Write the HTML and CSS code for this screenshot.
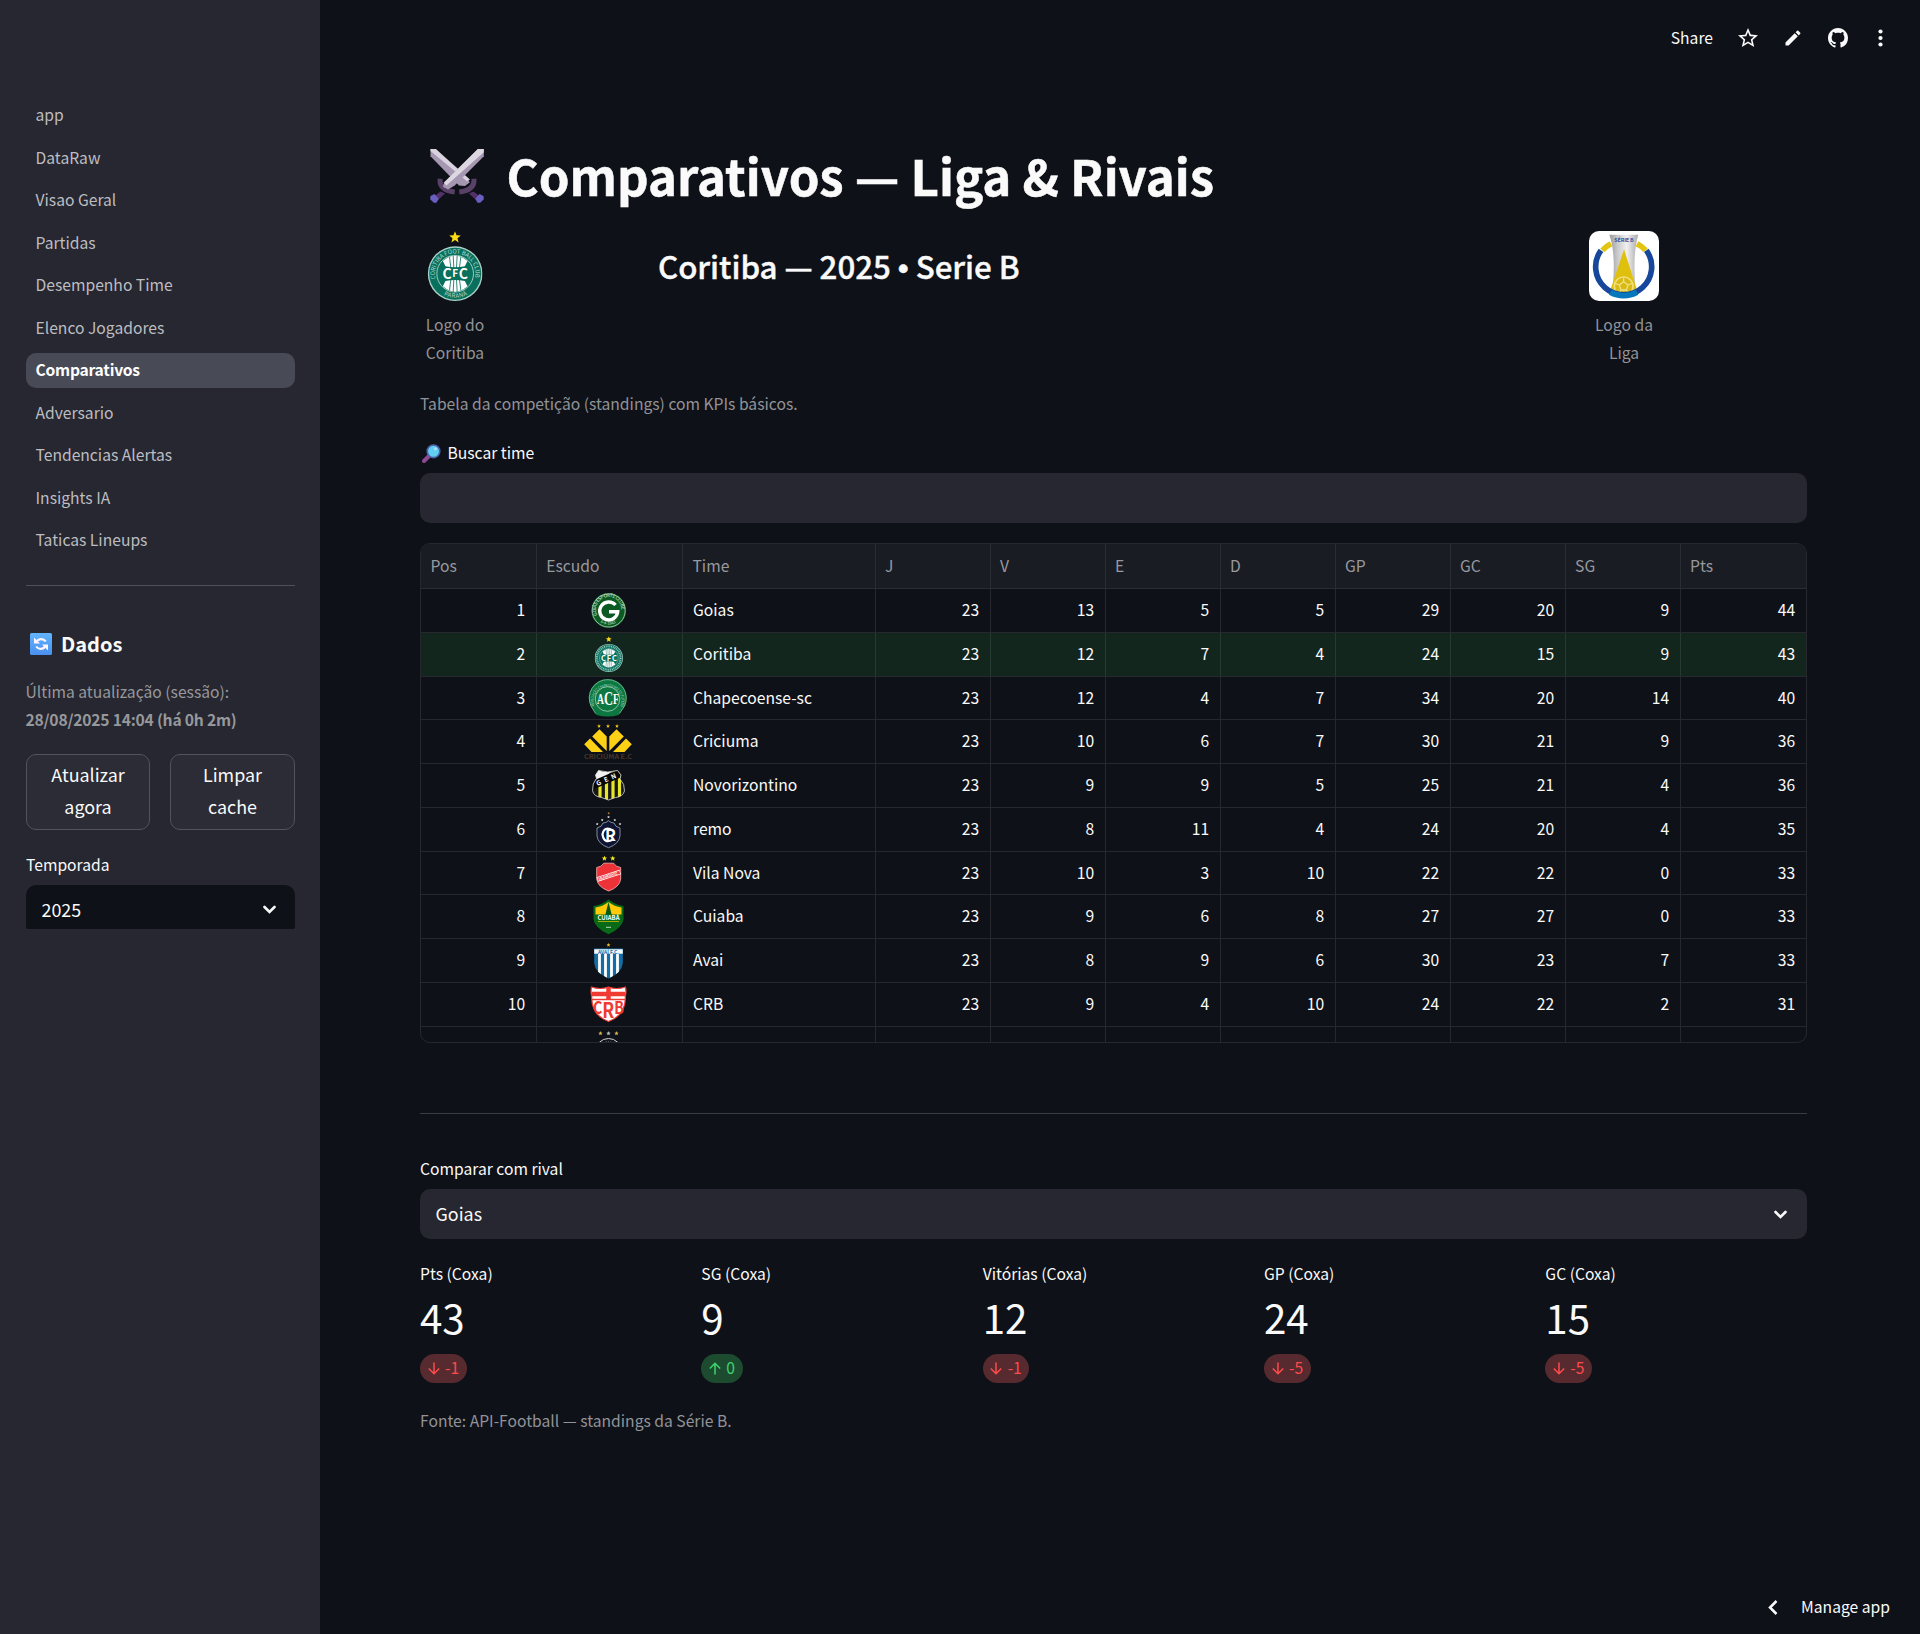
FILE: index.html
```html
<!DOCTYPE html>
<html lang="pt-BR">
<head>
<meta charset="utf-8">
<title>Comparativos</title>
<link rel="stylesheet" href="styles.css">
</head>
<body>
<svg class="defs" aria-hidden="true">
  <symbol id="star" viewBox="0 0 20 20"><path d="M10 0l2.600 6.900 7.400.3-5.800 4.600 2 7.200-6.200-4.100L3.800 19l2-7.200L0 7.200l7.400-.3z"/></symbol>
  <symbol id="chevron" viewBox="0 0 13 9"><path d="M1.500 2L6.500 7l5-5" fill="none" stroke="currentColor" stroke-width="2.600" stroke-linecap="round"/></symbol>
  <symbol id="down" viewBox="0 0 12 13"><path d="M6 .5v11M.8 6.500L6 11.700l5.200-5.200" fill="none" stroke="currentColor" stroke-width="1.500"/></symbol>
  <symbol id="up" viewBox="0 0 12 13"><path d="M6 12.500v-11M.8 6.500L6 1.300l5.200 5.200" fill="none" stroke="currentColor" stroke-width="1.500"/></symbol>
  <symbol id="coritiba" viewBox="38 272 165 210">
    <use href="#star" x="103" y="273" width="35" height="35" fill="#fddc14"/>
    <circle cx="121" cy="400" r="82" fill="#a9d3ca"/>
    <circle cx="121" cy="400" r="78" fill="#08705c"/>
    <circle cx="121" cy="400" r="55" fill="#08705c" stroke="#9fccc2" stroke-width="3"/>
    <path d="M84 362Q121 330 158 362L150 378Q121 384 92 378zM84 438Q121 470 158 438L150 422Q121 416 92 422z" fill="#fff"/>
    <path d="M104 350l4 32M115 345l2 38M127 345l-2 38M138 350l-4 32M104 450l4-32M115 455l2-38M127 455l-2-38M138 450l-4-32" stroke="#08705c" stroke-width="2.500"/>
  </symbol>
</svg>

<div class="app">
  <aside class="sidebar">
    <nav class="nav">
      <a>app</a><a>DataRaw</a><a>Visao Geral</a><a>Partidas</a><a>Desempenho Time</a><a>Elenco Jogadores</a>
      <a class="active">Comparativos</a><a>Adversario</a><a>Tendencias Alertas</a><a>Insights IA</a><a>Taticas Lineups</a>
    </nav>
    <hr class="side-rule">
    <h2 class="side-title">
      <svg width="22" height="22" viewBox="0 0 22 22"><defs><linearGradient id="blue" x2="0" y2="1"><stop stop-color="#62b5fd"/><stop offset="1" stop-color="#4a90ef"/></linearGradient></defs><rect width="22" height="22" rx="1.500" fill="url(#blue)"/><path d="M6.200 9.500A5.500 5.500 0 0 1 15.800 8.500M15.800 12.500A5.500 5.500 0 0 1 6.200 13.500" fill="none" stroke="#fff4ff" stroke-width="2.200"/><path d="M4 4.500v6h6zM18 17.500v-6h-6z" fill="#fff4ff"/></svg>
      Dados
    </h2>
    <p class="caption">Última atualização (sessão):<br><b>28/08/2025 14:04 (há 0h 2m)</b></p>
    <div class="buttons"><button>Atualizar<br>agora</button><button>Limpar<br>cache</button></div>
    <p class="label side-label">Temporada</p>
    <div class="select side-select"><span>2025</span><svg width="13" height="9"><use href="#chevron"/></svg></div>
  </aside>

  <main class="main">
    <header class="toolbar">
      <span>Share</span>
      <svg class="i-star" width="24" height="24" viewBox="0 0 24 24"><path fill="currentColor" d="M22 9.240l-7.190-.62L12 2 9.190 8.630 2 9.240l5.460 4.730L5.820 21 12 17.270 18.180 21l-1.630-7.030L22 9.240zM12 15.400l-3.760 2.270 1-4.280-3.320-2.880 4.380-.38L12 6.100l1.710 4.040 4.380.38-3.320 2.880 1 4.280L12 15.400z"/></svg>
      <svg class="i-pen" width="20" height="20" viewBox="0 0 24 24"><path fill="currentColor" d="M3 17.250V21h3.750L17.810 9.940l-3.750-3.750L3 17.250zM20.710 7.040a1 1 0 0 0 0-1.410l-2.340-2.340a1 1 0 0 0-1.410 0l-1.830 1.830 3.750 3.750 1.830-1.830z"/></svg>
      <svg class="i-git" width="20" height="20" viewBox="0 0 16 16"><path fill="currentColor" d="M8 0C3.580 0 0 3.580 0 8c0 3.540 2.290 6.530 5.470 7.590.4.070.55-.17.55-.38 0-.19-.01-.82-.01-1.490-2.010.37-2.530-.49-2.690-.94-.09-.23-.48-.94-.82-1.130-.28-.15-.68-.52-.01-.53.63-.01 1.080.58 1.230.82.72 1.210 1.870.87 2.330.66.07-.52.28-.87.51-1.070-1.780-.2-3.640-.89-3.640-3.950 0-.87.31-1.590.82-2.150-.08-.2-.36-1.020.08-2.120 0 0 .67-.21 2.200.82.64-.18 1.320-.27 2-.27s1.360.09 2 .27c1.530-1.040 2.200-.82 2.200-.82.44 1.100.16 1.920.08 2.120.51.56.82 1.270.82 2.150 0 3.070-1.870 3.750-3.650 3.950.29.25.54.73.54 1.480 0 1.070-.01 1.930-.01 2.200 0 .21.15.46.55.38A8.010 8.010 0 0 0 16 8c0-4.420-3.580-8-8-8z"/></svg>
      <svg class="i-dots" width="5" height="18" viewBox="0 0 5 18"><g fill="currentColor"><circle cx="2.500" cy="2.500" r="2.100"/><circle cx="2.500" cy="9" r="2.100"/><circle cx="2.500" cy="15.500" r="2.100"/></g></svg>
    </header>

    <section class="content">
      <h1 class="title">
        <svg width="54" height="54" viewBox="45 28 162 163">
          <path d="M46 28h16L165 128 150 140 132 138 46 50z" fill="#a596b2"/><path d="M46 28h16L165 120l-8 6L46 34z" fill="#d9d2df"/>
          <path d="M75 118q-4 34 44 40M177 118q4 34-44 40" fill="none" stroke="#584067" stroke-width="15"/>
          <path d="M76 156l14 6-22 20-12-10zM176 156l-14 6 22 20 12-10z" fill="#54306b"/>
          <path d="M46 170l12-6 13 14-7 12H56L45 180zM206 170l-12-6-13 14 7 12h8l11-10z" fill="#6a5fc0"/>
          <path d="M207 28h-18L88 128l-5 14 16 8 20-12 88-88z" fill="#a596b2"/><path d="M207 28h-18L86 130l8 8L207 38z" fill="#ddd7e2"/>
        </svg>
        <span>Comparativos — Liga &amp; Rivais</span>
      </h1>
      <div class="hero">
        <figure>
          <svg width="70" height="70" viewBox="15.500 272 210 210">
            <use href="#coritiba" x="38" y="272" width="165" height="210"/>
            <path id="corArc" d="M62 416A61 61 0 1 1 180 416" fill="none"/>
            <text font-size="18" fill="#b7dcd4"><textPath href="#corArc" textLength="218" lengthAdjust="spacingAndGlyphs">CORITIBA FOOT BALL CLUB</textPath></text>
            <path id="corLow" d="M75 456A72 72 0 0 0 167 456" fill="none"/>
            <text font-size="18" fill="#b7dcd4"><textPath href="#corLow" startOffset="14" textLength="74">PARANÁ</textPath></text>
            <text x="121" y="415" font-size="42" font-weight="700" fill="#fff" text-anchor="middle">C<tspan font-size="30" dx="2" dy="-4">F</tspan><tspan dx="2" dy="4">C</tspan></text>
          </svg>
          <figcaption>Logo do Coritiba</figcaption>
        </figure>
        <h2>Coritiba — 2025 <span class="dot">•</span> Serie B</h2>
        <figure>
          <svg class="league" width="70" height="70" viewBox="0 0 210 210">
            <defs><linearGradient id="cup"><stop stop-color="#999"/><stop offset=".3" stop-color="#ccc"/><stop offset=".6" stop-color="#f0f0f0"/><stop offset="1" stop-color="#aaa"/></linearGradient></defs>
            <rect width="210" height="210" fill="#fff"/>
            <path d="M40 58A84 84 0 0 1 66 38M144 38A84 84 0 0 1 170 58" fill="none" stroke="#e2c510" stroke-width="17"/>
            <path d="M61 11H148Q130 70 140 182H70Q82 70 61 11z" fill="url(#cup)"/>
            <path d="M105 55L145 180Q105 205 63 180z" fill="#dfc10d"/>
            <circle cx="104" cy="166" r="28" fill="#d8ba15" stroke="#f0df7e" stroke-width="5"/>
            <path d="M104 152l13 10-5 15H96l-5-15zM104 152v-12M117 162l12-5M112 177l8 11M96 177l-8 11M91 162l-12-5" fill="none" stroke="#f0df7e" stroke-width="4"/>
            <path d="M36 58A84 84 0 1 0 172 58" fill="none" stroke="#17479b" stroke-width="17"/>
            <path d="M64 184A84 84 0 0 0 144 184" fill="none" stroke="#0878bd" stroke-width="17"/>
            <text x="76" y="34" font-size="16" font-weight="700" fill="#2b55a0" textLength="58">SÉRIE B</text>
          </svg>
          <figcaption>Logo da Liga</figcaption>
        </figure>
      </div>
      <p class="caption intro">Tabela da competição (standings) com KPIs básicos.</p>
      <p class="label search-label">
        <svg width="19" height="19" viewBox="0 0 19 19"><path d="M2 17l6-6" stroke="#8d4a93" stroke-width="4" stroke-linecap="round"/><circle cx="11.500" cy="7.300" r="6.300" fill="#62cdf2" stroke="#4c62a8" stroke-width="1.600"/><circle cx="13.500" cy="4.800" r="1.500" fill="#a9e6fb"/></svg>
        Buscar time
      </p>
      <div class="input"></div>

      <div class="table">
        <div class="row head"><span>Pos</span><span>Escudo</span><span>Time</span><span>J</span><span>V</span><span>E</span><span>D</span><span>GP</span><span>GC</span><span>SG</span><span>Pts</span></div>
        <div class="row"><span>1</span><span><svg viewBox="0 0 48 43"><circle cx="23.700" cy="21.500" r="17.500" fill="#0b5a22"/><circle cx="23.700" cy="21.500" r="16.500" fill="none" stroke="#b9d4bf" stroke-width=".8"/><path id="goA" d="M12.300 26A12.600 12.600 0 1 1 35 26" fill="none"/><text font-size="4.800" fill="#d5e6d8"><textPath href="#goA" textLength="45">GOIÁS ESPORTE CLUBE</textPath></text><path id="goB" d="M13 31.500A15 15 0 0 0 34 31.500" fill="none"/><text font-size="4" fill="#d5e6d8"><textPath href="#goB" startOffset="3">6-4-1943</textPath></text><path d="M30.500 16A9 9 0 1 0 32.700 22.700H24" fill="none" stroke="#fff" stroke-width="3.400"/></svg></span><span>Goias</span><span>23</span><span>13</span><span>5</span><span>5</span><span>29</span><span>20</span><span>9</span><span>44</span></div>
        <div class="row mark"><span>2</span><span><svg viewBox="0 0 48 43"><use href="#coritiba" x="9.500" y="3" width="28.500" height="36"/><circle cx="23.750" cy="25" r="11.800" fill="none" stroke="#8cc3b8" stroke-width="2" stroke-dasharray="1 .8"/><text x="23.900" y="27.700" font-size="7.500" font-weight="700" fill="#fff" text-anchor="middle" textLength="16">CFC</text></svg></span><span>Coritiba</span><span>23</span><span>12</span><span>7</span><span>4</span><span>24</span><span>15</span><span>9</span><span>43</span></div>
        <div class="row"><span>3</span><span><svg viewBox="0 0 48 43"><path d="M11.500 38L5.500 29A19 19 0 1 1 40 29L33.500 38Q23 41 11.500 38z" fill="#0d7741"/><path d="M10.500 36.500L6 29A18.500 18.500 0 1 1 39.500 29L34.500 36.500" fill="none" stroke="#7fbd99" stroke-width=".8"/><circle cx="22.500" cy="22" r="12.300" fill="#0d7741" stroke="#a6d3b8" stroke-width=".8"/><path id="chA" d="M9.500 29A14 14 0 1 1 35.500 29" fill="none"/><text font-size="3.800" fill="#b7dcc6"><textPath href="#chA" textLength="56" lengthAdjust="spacingAndGlyphs">ASSOCIAÇÃO CHAPECOENSE DE FUTEBOL</textPath></text><text class="serif" x="12" y="26.500" font-size="14" font-weight="700" fill="#fff" textLength="22" lengthAdjust="spacingAndGlyphs">A<tspan font-size="18" dy="1.500">C</tspan><tspan dy="-1.500">F</tspan></text></svg></span><span>Chapecoense-sc</span><span>23</span><span>12</span><span>4</span><span>7</span><span>34</span><span>20</span><span>14</span><span>40</span></div>
        <div class="row"><span>4</span><span><svg viewBox="0 0 48 43"><g fill="#fcd116"><use href="#star" x="12" y="4" width="4" height="4"/><use href="#star" x="21" y="4" width="4" height="4"/><use href="#star" x="30" y="4" width="4" height="4"/><path d="M-.8 24.300L5 18.500 18 32H6.500zM7.200 16.600l7.300-7.300 7.200 7.300V31zM46.800 24.300L41 18.500 28 32h11.500zM38.800 16.600l-7.300-7.300-7.200 7.300V31z"/></g><text x="-1" y="39" font-size="5.800" font-weight="700" fill="#46362a" textLength="48" lengthAdjust="spacingAndGlyphs">CRICIÚMA E.C</text></svg></span><span>Criciuma</span><span>23</span><span>10</span><span>6</span><span>7</span><span>30</span><span>21</span><span>9</span><span>36</span></div>
        <div class="row"><span>5</span><span><svg viewBox="0 0 48 43"><defs><clipPath id="nov"><path d="M10.500 11l3-4.500q9 3 19 0l3.500 4.500-1 4q5 5 4.500 12-2 6-9 6.500l-7 2.500-7-2.500q-8-1-9-7-.5-7 4-12z"/></clipPath></defs><g clip-path="url(#nov)"><path d="M0 0h48v43H0z" fill="#161616"/><path d="M15 0v43M21.500 0v43M28 0v43M34.500 0v43" stroke="#e6e629" stroke-width="3.200"/><path d="M9 5h22L9 20z" fill="#f2f2f2"/><path d="M6 22L38 8" stroke="#050505" stroke-width="8"/><text transform="translate(12.500 22) rotate(-24)" font-size="6.500" font-weight="700" fill="#fff" textLength="21">GEN</text></g><path d="M10.500 11l3-4.500q9 3 19 0l3.500 4.500-1 4q5 5 4.500 12-2 6-9 6.500l-7 2.500-7-2.500q-8-1-9-7-.5-7 4-12z" fill="none" stroke="#ddd" stroke-width=".8"/></svg></span><span>Novorizontino</span><span>23</span><span>9</span><span>9</span><span>5</span><span>25</span><span>21</span><span>4</span><span>36</span></div>
        <div class="row"><span>6</span><span><svg viewBox="0 0 48 43"><use href="#star" x="22.200" y="3.700" width="3" height="3" fill="#b07c34"/><g fill="#dfe3ea"><use href="#star" x="22" y="7.500" width="3" height="3"/><use href="#star" x="15.700" y="10.500" width="3" height="3"/><use href="#star" x="28.300" y="10.500" width="3" height="3"/><use href="#star" x="10.700" y="14.500" width="3" height="3"/><use href="#star" x="33.500" y="14.500" width="3" height="3"/></g><path d="M12 20q5-1 6-5 3 0 5.500-2.300Q26 15 29 15q1 4 6 5v8q-1 8-11.500 11.700Q13 36 12 28z" fill="#0d1533" stroke="#8e97ad" stroke-width=".9"/><path d="M28 22.500q-9-5-10.500 4 1.500 10 10.500 5" fill="none" stroke="#fff" stroke-width="2.200"/><text x="20" y="32.500" font-size="16" font-weight="700" fill="#fff">R</text></svg></span><span>remo</span><span>23</span><span>8</span><span>11</span><span>4</span><span>24</span><span>20</span><span>4</span><span>35</span></div>
        <div class="row"><span>7</span><span><svg viewBox="0 0 48 43"><g fill="#f6ef1c"><use href="#star" x="16.700" y="3.500" width="5.500" height="5.500"/><use href="#star" x="25" y="3.500" width="5.500" height="5.500"/></g><path d="M11.700 15.500q5-.5 7-4.300h10q2 3.800 7 4.300v11.500q-1 8-12 12-11-4-12-12z" fill="#ee3338" stroke="#f7b3b3" stroke-width=".8"/><path d="M12.300 27.500L35.200 20" stroke="#fff" stroke-width="4.600"/><path d="M12.800 27.300L34.700 20.200" stroke="#ee3338" stroke-width="3"/><text transform="translate(14 28.400) rotate(-18)" font-size="3.600" font-weight="700" fill="#fff" textLength="20">VILA NOVA F.C</text></svg></span><span>Vila Nova</span><span>23</span><span>10</span><span>3</span><span>10</span><span>22</span><span>22</span><span>0</span><span>33</span></div>
        <div class="row"><span>8</span><span><svg viewBox="0 0 48 43"><path d="M8.500 11q8-1 15-6.500 7 5.500 15 6.500v13q-1 9-15 15.300Q9.500 33 8.500 24z" fill="#086a16"/><path d="M10.500 12.500q7-1 13-5.500 6 4.500 13 5.500V20h-26z" fill="#fdc908"/><path d="M23.500 7l3.500 14h-7z" fill="#065a14"/><rect x="9" y="19.500" width="29" height="7" fill="#086a16"/><text x="12.500" y="25" font-size="6" font-weight="700" fill="#fff" textLength="22" lengthAdjust="spacingAndGlyphs">CUIABÁ</text><path d="M13 26.500h21" stroke="#e8c508" stroke-width=".7"/><path d="M21 32.300h5" stroke="#b8d8bb"/></svg></span><span>Cuiaba</span><span>23</span><span>9</span><span>6</span><span>8</span><span>27</span><span>27</span><span>0</span><span>33</span></div>
        <div class="row"><span>9</span><span><svg viewBox="0 0 48 43"><defs><clipPath id="av"><path d="M9.200 9.500h28.600v14.500q-1 10-14.300 15.500Q10.200 34 9.200 24z"/></clipPath></defs><use href="#star" x="21.400" y="3.800" width="4.200" height="4.200" fill="#e5b52a"/><g clip-path="url(#av)"><path d="M0 0h48v43H0z" fill="#146ea6"/><path d="M14.500 14v29M20.500 14v29M26.500 14v29M32.500 14v29" stroke="#fff" stroke-width="2.800"/><path d="M9 10.300h29v4.500H9z" fill="#f2f7fa"/></g><text x="13" y="14.600" font-size="5" font-weight="700" fill="#146ea6" textLength="21">AVAÍ F.C.</text></svg></span><span>Avai</span><span>23</span><span>8</span><span>9</span><span>6</span><span>30</span><span>23</span><span>7</span><span>33</span></div>
        <div class="row"><span>10</span><span><svg viewBox="0 0 48 43"><path d="M6.500 4q9 3 17 0 8 3 17 0 1 5-.2 9 1 19-16.800 25.500Q6 32 6.700 13 5.500 9 6.500 4z" fill="#fff" stroke="#ef3b32" stroke-width="1.200"/><path d="M23.500 4v13M7 11h33" stroke="#ef3b32" stroke-width="4.500"/><path d="M7 16.500h33" stroke="#ef3b32" stroke-width="1.400"/><text x="8" y="31" font-size="17" font-weight="700" fill="#ef3b32" textLength="31" lengthAdjust="spacingAndGlyphs">C<tspan font-size="21" dy="4">R</tspan><tspan dy="-4">B</tspan></text></svg></span><span>CRB</span><span>23</span><span>9</span><span>4</span><span>10</span><span>24</span><span>22</span><span>2</span><span>31</span></div>
        <div class="row"><span></span><span><svg viewBox="0 0 48 43"><g fill="#d6ac55"><use href="#star" x="13.200" y="4" width="4.600" height="4.600"/><use href="#star" x="21.200" y="4" width="4.600" height="4.600" fill="#b9bcc2"/><use href="#star" x="29.200" y="4" width="4.600" height="4.600"/></g><circle cx="23.500" cy="24.500" r="13" fill="#15171c" stroke="#d0d2d5"/><circle cx="23.500" cy="25" r="9.500" fill="#15171c" stroke="#8a8d92" stroke-width="2" stroke-dasharray="1 1"/></svg></span><span></span><span></span><span></span><span></span><span></span><span></span><span></span><span></span><span></span></div>
      </div>

      <hr class="rule">
      <p class="label rival-label">Comparar com rival</p>
      <div class="select rival-select"><span>Goias</span><svg width="13" height="9"><use href="#chevron"/></svg></div>
      <div class="metrics">
        <div><p class="label">Pts (Coxa)</p><p class="value">43</p><p class="delta"><svg width="12" height="13"><use href="#down"/></svg><span>-1</span></p></div>
        <div><p class="label">SG (Coxa)</p><p class="value">9</p><p class="delta pos"><svg width="12" height="13"><use href="#up"/></svg><span>0</span></p></div>
        <div><p class="label">Vitórias (Coxa)</p><p class="value">12</p><p class="delta"><svg width="12" height="13"><use href="#down"/></svg><span>-1</span></p></div>
        <div><p class="label">GP (Coxa)</p><p class="value">24</p><p class="delta"><svg width="12" height="13"><use href="#down"/></svg><span>-5</span></p></div>
        <div><p class="label">GC (Coxa)</p><p class="value">15</p><p class="delta"><svg width="12" height="13"><use href="#down"/></svg><span>-5</span></p></div>
      </div>
      <p class="caption source">Fonte: API-Football — standings da Série B.</p>
    </section>

    <footer class="manage"><svg width="10" height="15" viewBox="0 0 10 15"><path d="M8.500 1L2 7.500 8.500 14" fill="none" stroke="currentColor" stroke-width="2.500"/></svg><span>Manage app</span></footer>
  </main>
</div>
</body>
</html>
```
FILE: styles.css
```css
* { box-sizing: border-box; margin: 0; padding: 0; }
html, body { height: 1634px; overflow: hidden; }
body {
  background: #0e1117;
  color: #fafafa;
  font-family: "Noto Sans CJK SC", "Noto Sans CJK JP", sans-serif;
  font-size: 15.67px;
}
.defs { position: absolute; width: 0; height: 0; }
svg { display: block; flex: none; overflow: visible; }
.serif { font-family: "Liberation Serif", serif; }

.app { display: grid; grid-template-columns: 320px 1fr; height: 1634px; overflow: hidden; }

/* Sidebar */
.sidebar { background: #262730; padding: 98px 25px 0 26px; display: flex; flex-direction: column; }
.nav { display: flex; flex-direction: column; gap: 8px; }
.nav a { height: 34.5px; line-height: 33.4px; padding: 0 9.5px; border-radius: 10px; color: #bdbdc1; }
.nav .active { background: #484a55; color: #fff; font-weight: 700; letter-spacing: -.25px; }
.side-rule { border: 0; height: 1px; background: #4f5059; margin-top: 27px; }
.side-title { display: flex; align-items: center; gap: 9px; height: 30px; margin-top: 43px; padding-left: 4px; font-size: 20px; line-height: 30px; font-weight: 700; }
.caption { color: #929398; line-height: 28px; }
.caption b { letter-spacing: -.22px; }
.sidebar .caption { margin-top: 19px; color: #97989c; margin-left: -.5px; }
.buttons { display: grid; grid-template-columns: 124px 125px; gap: 20px; margin-top: 20px; }
.buttons button {
  height: 76px; border: 1px solid #52535c; border-radius: 10px; background: #2b2c36;
  color: #fafafa; font: inherit; font-size: 17.9px; line-height: 32px; padding-bottom: 3px;
}
.label { line-height: 28px; height: 28px; }
.side-label { margin-top: 21px; }
.select {
  display: flex; align-items: center; justify-content: space-between;
  height: 50px; padding: 0 19.5px 0 15.5px; border-radius: 10px; background: #262730; font-size: 17.9px;
}
.side-select { height: 44px; margin-top: 6px; padding-top: 4px; background: #0e1117; border-radius: 10px 10px 2px 2px; }
.side-select svg { margin-top: 2px; }

/* Top bar */
.main { display: flex; flex-direction: column; }
.toolbar { display: flex; align-items: center; height: 75px; padding: 0 37px 0 0; justify-content: flex-end; }
.i-star { margin-left: 23px; }
.i-pen { margin-left: 23px; }
.i-git { margin-left: 25px; }
.i-dots { margin-left: 30px; }

/* Page content */
.content { flex: 1; width: 1386.7px; margin-left: 100px; padding-top: 69px; }
.title { display: flex; align-items: center; gap: 22.5px; height: 66px; padding-left: 10px; font-size: 49.2px; line-height: 66px; font-weight: 700; -webkit-text-stroke: .5px #fafafa; }
.title svg { margin-bottom: 2px; }
.title span { padding-bottom: 5px; }
.hero { display: flex; align-items: flex-start; margin-top: 21px; height: 137px; }
.hero figure { width: 70px; }
.hero figcaption { color: #929398; text-align: center; line-height: 28px; margin-top: 10px; padding: 0 3px; }
.hero h2 { flex: 1; margin-left: 168px; padding-top: 8.5px; font-size: 31.3px; line-height: 52px; font-weight: 500; -webkit-text-stroke: .4px #fafafa; letter-spacing: -.05px; }
.dot { font-family: "Liberation Sans", sans-serif; line-height: 1; }
.hero figure:last-child { margin-right: 147.7px; }
.league { border-radius: 10px; overflow: hidden; }
.intro { margin-top: 22px; }
.search-label { display: flex; align-items: center; gap: 6.5px; margin-top: 21px; padding-left: 2px; }
.input { height: 50px; margin-top: 6px; border-radius: 10px; background: #262730; }

.table { height: 500px; margin-top: 20px; border: 1px solid #26282e; border-radius: 10px; overflow: hidden; }
.row { display: grid; grid-template-columns: 115.7px 146.3px 192.6px repeat(7, 115px) 1fr; height: 43.75px; border-bottom: 1px solid #26282e; line-height: 41.5px; }
.row span { border-right: 1px solid #26282e; padding: 0 10.5px 0 10px; text-align: right; }
.row span:nth-child(3) { text-align: left; }
.row span:nth-child(2) { padding: 0; display: flex; justify-content: center; }
.row span:last-child { border-right: 0; }
.row svg { width: 48px; height: 43px; }
.row.head { height: 45px; line-height: 43.5px; background: #1a1c24; color: #98999e; border-color: #2b2d34; }
.row.head span, .row.head span:nth-child(2) { text-align: left; padding: 0 9.5px; display: block; border-color: #2b2d34; }
.row.mark { background: #12261e; }
.mark span { border-color: #253a32; }

.rule { border: 0; height: 1px; background: #3a3c42; margin-top: 70px; }
.rival-label { margin-top: 41px; }
.rival-select { margin-top: 6px; }
.rival-select span { padding-bottom: 3px; }
.metrics { display: grid; grid-template-columns: repeat(5, 1fr); gap: 20px; margin-top: 21px; }
.value { font-size: 40.3px; line-height: 58px; height: 60px; }
.delta { display: inline-flex; align-items: center; gap: 5.5px; height: 29px; margin-top: 6px; padding: 0 7.5px; border-radius: 15px; background: #562a2f; color: #ff4b4b; }
.delta span { padding-bottom: 2px; }
.delta.pos { background: #1c4b30; color: #3dd56d; }
.source { margin-top: 23.5px; }

.manage { display: flex; align-items: center; justify-content: flex-end; gap: 23px; height: 54px; padding-right: 30px; }
.manage span { padding-bottom: 2px; }
```
